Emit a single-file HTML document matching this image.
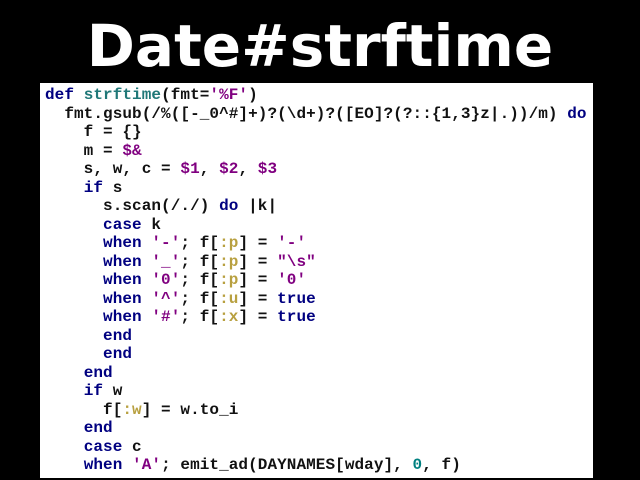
<!DOCTYPE html>
<html><head><meta charset="utf-8"><style>
html,body{margin:0;padding:0;background:#000;width:640px;height:480px;overflow:hidden}
h1{position:absolute;left:0;width:640px;top:7px;margin:0;text-align:center;color:#fff;font:bold 58px "DejaVu Sans",sans-serif;line-height:78px}
.box{position:absolute;left:40px;top:83px;width:553px;height:395px;background:#fff}
pre{margin:0;padding:3px 0 0 5px;font:bold 16px "Liberation Mono",monospace;line-height:18.5px;color:#111;letter-spacing:0.07px}
.k{color:#000080}.s{color:#800080}.y{color:#b8a040}.n{color:#008080}.f{color:#207878}
</style></head><body>
<h1>Date#strftime</h1>
<div class="box"><pre><span class="k">def</span> <span class="f">strftime</span>(fmt=<span class="s">'%F'</span>)
  fmt.gsub(/%([-_0^#]+)?(\d+)?([EO]?(?::{1,3}z|.))/m) <span class="k">do</span>
    f = {}
    m = <span class="s">$&amp;</span>
    s, w, c = <span class="s">$1</span>, <span class="s">$2</span>, <span class="s">$3</span>
    <span class="k">if</span> s
      s.scan(/./) <span class="k">do</span> |k|
      <span class="k">case</span> k
      <span class="k">when</span> <span class="s">'-'</span>; f[<span class="y">:p</span>] = <span class="s">'-'</span>
      <span class="k">when</span> <span class="s">'_'</span>; f[<span class="y">:p</span>] = <span class="s">"\s"</span>
      <span class="k">when</span> <span class="s">'0'</span>; f[<span class="y">:p</span>] = <span class="s">'0'</span>
      <span class="k">when</span> <span class="s">'^'</span>; f[<span class="y">:u</span>] = <span class="k">true</span>
      <span class="k">when</span> <span class="s">'#'</span>; f[<span class="y">:x</span>] = <span class="k">true</span>
      <span class="k">end</span>
      <span class="k">end</span>
    <span class="k">end</span>
    <span class="k">if</span> w
      f[<span class="y">:w</span>] = w.to_i
    <span class="k">end</span>
    <span class="k">case</span> c
    <span class="k">when</span> <span class="s">'A'</span>; emit_ad(DAYNAMES[wday], <span class="n">0</span>, f)</pre></div>
</body></html>
